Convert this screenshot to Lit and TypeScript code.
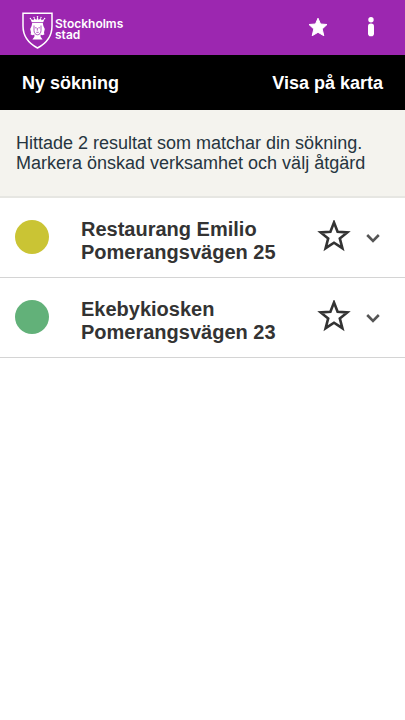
import { LitElement, html, css } from "lit";
import { customElement, property, state } from "lit/decorators.js";

@customElement("result-row")
class ResultRow extends LitElement {
  @property() name = "";
  @property() address = "";
  @property() color = "";

  static styles = css`
    :host {
      display: flex;
      align-items: center;
      box-sizing: border-box;
      min-height: 80px;
      padding: 0 21px 2px 15px;
      border-bottom: 1px solid #d4d4d4;
    }
    .dot {
      flex: none;
      width: 34px;
      height: 34px;
      border-radius: 50%;
    }
    .title {
      flex: 1;
      margin: 8px 0 0 32px;
      font-size: 20px;
      line-height: 23px;
      font-weight: 700;
      color: #333;
    }
    .line {
      display: block;
    }
    button {
      flex: none;
      display: block;
      padding: 0;
      border: 0;
      background: none;
      cursor: pointer;
    }
    svg {
      display: block;
    }
    .expand {
      margin-left: 11px;
    }
  `;

  render() {
    return html`
      <span class="dot" style="background:${this.color}"></span>
      <h2 class="title">
        <span class="line">${this.name}</span>
        <span class="line">${this.address}</span>
      </h2>
      <button aria-label="Spara ${this.name} som favorit">
        <svg width="34" height="34" viewBox="0 0 34 34">
          <path
            d="M17 2.5 20.6 11.8 30.3 12.4 22.8 18.4 25.4 28.2 17 22.7 8.6 28.2 11.2 18.4 3.7 12.4 13.4 11.8Z"
            fill="none" stroke="#333" stroke-width="2.6" />
        </svg>
      </button>
      <button class="expand" aria-label="Visa mer om ${this.name}">
        <svg width="22" height="22" viewBox="0 0 22 22">
          <path d="M5.2 9 11 14.8 16.8 9" fill="none" stroke="#555" stroke-width="2.6" />
        </svg>
      </button>
    `;
  }
}

@customElement("app-root")
class AppRoot extends LitElement {
  @state() private results = [
    { name: "Restaurang Emilio", address: "Pomerangsvägen 25", color: "#cac434" },
    { name: "Ekebykiosken", address: "Pomerangsvägen 23", color: "#62b179" },
  ];

  static styles = css`
    :host {
      display: block;
      min-height: 100vh;
      background: #fff;
      font-family: "Liberation Sans", Arial, sans-serif;
    }
    svg {
      display: block;
    }
    .header {
      display: flex;
      align-items: center;
      justify-content: space-between;
      height: 55px;
      padding: 0 23px 0 22px;
      background: #9c27b0;
    }
    .logo {
      display: flex;
      align-items: center;
      gap: 2px;
      color: #fff;
      text-decoration: none;
      padding-top: 6px;
    }
    .wordmark {
      font: 600 12px/11px Inter, sans-serif;
      padding-bottom: 4px;
    }
    .line {
      display: block;
    }
    .tools {
      display: flex;
      gap: 31px;
      padding-bottom: 2px;
    }
    button {
      padding: 0;
      border: 0;
      background: none;
      color: #fff;
      cursor: pointer;
    }
    .actions {
      display: flex;
      align-items: center;
      justify-content: space-between;
      height: 55px;
      padding: 0 22px;
      background: #000;
    }
    .actions button {
      font: 700 18px/20px "Liberation Sans", Arial, sans-serif;
    }
    .summary {
      margin: 0;
      padding: 23px 16px;
      border-bottom: 2px solid #e6e6e2;
      background: #f4f3ee;
      color: #263540;
      font-size: 18px;
      line-height: 20px;
    }
  `;

  render() {
    return html`
      <header class="header">
        <a class="logo" href="#" aria-label="Stockholms stad">
          <svg width="31" height="37" viewBox="0 0 31 37">
            <path d="M1 1.2H30V14C30 24.5 25 31 15.5 36C6 31 1 24.5 1 14Z" fill="none" stroke="#fff" stroke-width="1.5" />
            <g fill="#fff">
              <path d="M9.8 10.2 8.4 6.8 11.5 8.2 12.2 6 14.3 8 15.5 4.6 16.7 8 18.8 6 19.5 8.2 22.6 6.8 21.2 10.2Z" />
              <circle cx="8.4" cy="6.5" r=".7" />
              <circle cx="12" cy="5.5" r=".7" />
              <circle cx="15.5" cy="4.7" r=".8" />
              <circle cx="19" cy="5.5" r=".7" />
              <circle cx="22.6" cy="6.5" r=".7" />
              <path d="M10.2 11H20.8L21.4 14 22.8 17 22 20.5 22.4 22.5 20.2 23.3 18.6 22.4V24.8L20.6 27.6H10.4L12.4 24.8V22.4L10.8 23.3 8.6 22.5 9 20.5 8.2 17 9.6 14Z" />
            </g>
            <g fill="none" stroke="#9c27b0" stroke-width=".8">
              <path d="M12 13.5V18.5C12 21 13.5 22.8 15.5 22.8S19 21 19 18.5V13.5" />
              <path d="M13.1 15.8H14.6M16.4 15.8H17.9M15.3 16V18.6M14.3 20.3H16.7" />
            </g>
          </svg>
          <span class="wordmark">
            <span class="line">Stockholms</span>
            <span class="line">stad</span>
          </span>
        </a>
        <div class="tools">
          <button aria-label="Favoriter">
            <svg width="22" height="22" viewBox="0 0 22 22">
              <path
                d="M11 2.2 13.5 8 20 8.5 15.2 13 16.8 19.7 11 16.3 5.2 19.7 6.8 13 2 8.5 8.5 8Z"
                fill="#fff" stroke="#fff" stroke-width="1" stroke-linejoin="round" />
            </svg>
          </button>
          <button aria-label="Information">
            <svg width="22" height="22" viewBox="0 0 22 22">
              <circle cx="11" cy="3.8" r="2.7" fill="#fff" />
              <rect x="8" y="7.6" width="6" height="12.6" rx="2.8" fill="#fff" />
            </svg>
          </button>
        </div>
      </header>
      <nav class="actions">
        <button>Ny sökning</button>
        <button>Visa på karta</button>
      </nav>
      <main>
        <p class="summary">
          Hittade 2 resultat som matchar din sökning. Markera önskad verksamhet och välj åtgärd
        </p>
        ${this.results.map(
          (r) => html`<result-row .name=${r.name} .address=${r.address} .color=${r.color}></result-row>`
        )}
      </main>
    `;
  }
}
